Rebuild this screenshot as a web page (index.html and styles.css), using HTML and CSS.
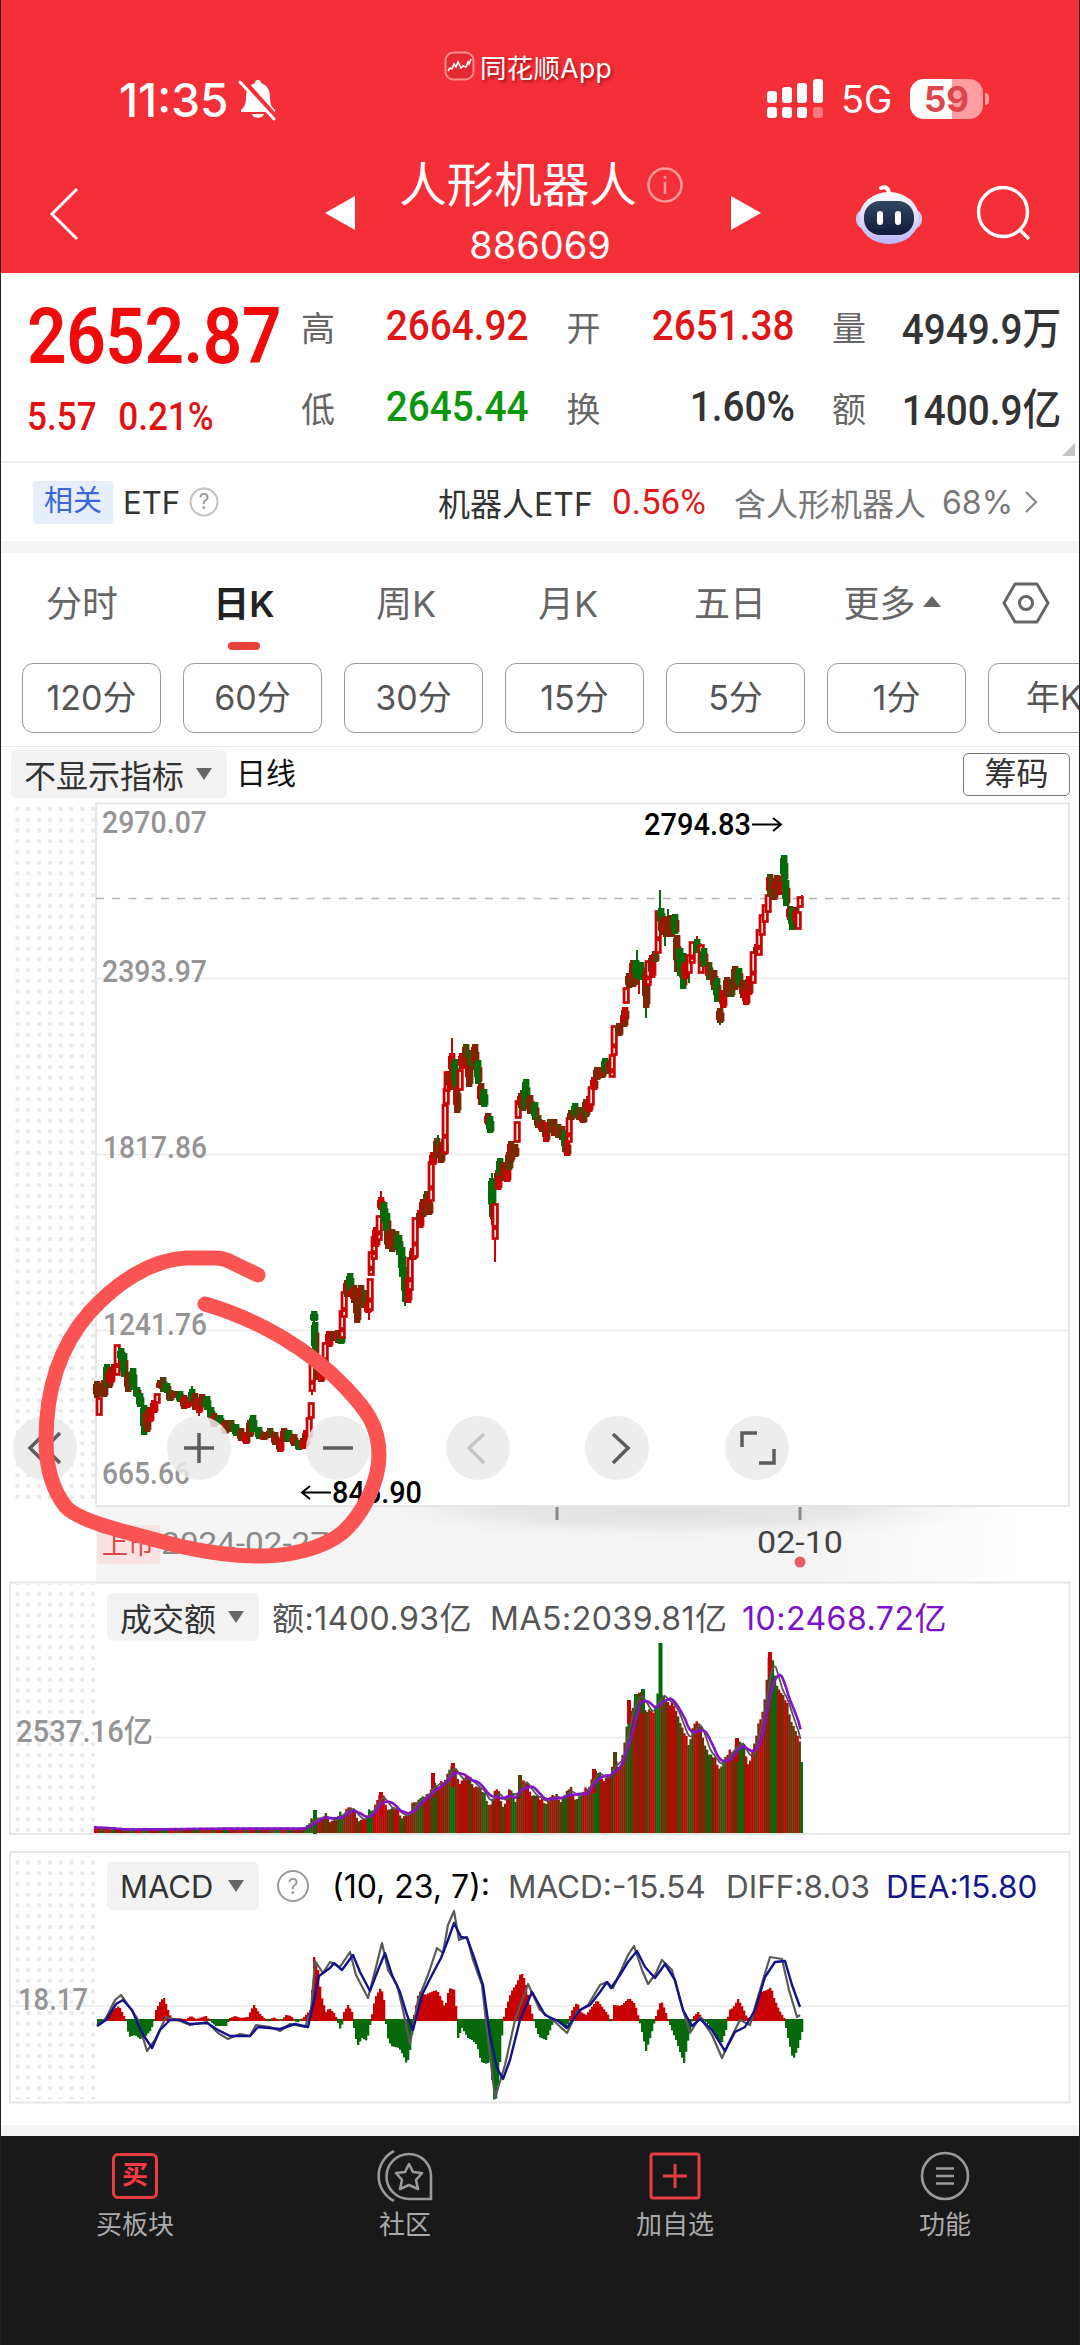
FILE: index.html
```html
<!DOCTYPE html>
<html lang="zh-CN">
<head>
  <meta charset="UTF-8">
  <title>人形机器人 886069</title>
  <link rel="stylesheet" href="styles.css">
</head>
<body>
<div class="app">

  <!-- Header -->
  <header class="header">
    <div class="status">
      <div class="clock">
        <span>11:35</span>
        <svg width="40" height="42" viewBox="0 0 40 42">
          <path d="M20 1c2 0 3 1 3 3 6 2 9 7 9 14 0 8 2 10 5 13v2H3v-2c3-3 5-5 5-13C8 11 11 6 17 4c0-2 1-3 3-3z" fill="#fff"/>
          <path d="M14 35h12c-1 5-11 5-12 0z" fill="#fff"/>
          <path d="M5 2l33 37" stroke="#f42f38" stroke-width="6"/>
          <path d="M2 3l34 37" stroke="#fff" stroke-width="3" stroke-linecap="round"/>
        </svg>
      </div>
      <div class="app-name">
        <svg width="32" height="30" viewBox="0 0 32 30">
          <rect x="1.5" y="1.5" width="28" height="27" rx="8" fill="#e32a32" stroke="#ff8d8d" stroke-width="2"/>
          <path d="M4 20l2-3 2 1 2-5 2 3 2-5 3 6 2-2 3 1 2-5 1 2 2-5" fill="none" stroke="#fff" stroke-width="1.6"/>
        </svg>
        <span>同花顺App</span>
      </div>
      <div class="signals">
        <svg width="58" height="42" viewBox="0 0 58 42" fill="#fff">
          <rect x="1" y="13" width="10" height="12" rx="3"/>
          <rect x="16" y="9" width="10" height="16" rx="3"/>
          <rect x="31" y="5" width="10" height="20" rx="3"/>
          <rect x="47" y="1" width="10" height="24" rx="3"/>
          <rect x="1" y="29" width="10" height="11" rx="3"/>
          <rect x="16" y="29" width="10" height="11" rx="3"/>
          <rect x="31" y="29" width="10" height="11" rx="3"/>
          <rect x="47" y="29" width="10" height="11" rx="3" opacity=".35"/>
        </svg>
        <span class="net">5G</span>
        <span class="battery">59</span>
      </div>
    </div>
    <div class="title-bar">
      <svg class="back" width="34" height="56" viewBox="0 0 34 56"><path d="M30 3L5 28l25 25" fill="none" stroke="#fff" stroke-width="3"/></svg>
      <svg class="prev" width="32" height="36" viewBox="0 0 32 36"><path d="M31 1v34L1 18z" fill="#fff"/></svg>
      <div class="title">
        <div class="name">
          <h1>人形机器人</h1>
          <svg width="38" height="38" viewBox="0 0 38 38" fill="none" stroke="#ff9a9a" stroke-width="2.5"><circle cx="19" cy="19" r="16.5"/><path d="M19 16v12M19 10v3"/></svg>
        </div>
        <div class="code">886069</div>
      </div>
      <svg class="next" width="32" height="36" viewBox="0 0 32 36"><path d="M1 1v34l30-17z" fill="#fff"/></svg>
      <svg class="robot" width="68" height="62" viewBox="0 0 68 62">
        <defs>
          <linearGradient id="shell" x1="0" y1="0" x2="0" y2="1"><stop offset="0" stop-color="#fff"/><stop offset="1" stop-color="#b9b5fa"/></linearGradient>
          <linearGradient id="face" x1="0" y1="0" x2="0" y2="1"><stop offset="0" stop-color="#31475f"/><stop offset="1" stop-color="#111b3c"/></linearGradient>
        </defs>
        <path d="M34 11c0-5-3-8-8-6" fill="none" stroke="#fff" stroke-width="4" stroke-linecap="round"/>
        <rect x="1" y="26" width="66" height="20" rx="9" fill="#cdc8fb"/>
        <ellipse cx="34" cy="35" rx="30" ry="26" fill="url(#shell)"/>
        <rect x="9" y="18" width="50" height="34" rx="16" fill="url(#face)"/>
        <rect x="22" y="28" width="6" height="14" rx="3" fill="#fff"/>
        <rect x="40" y="28" width="6" height="14" rx="3" fill="#fff"/>
      </svg>
      <svg class="search" width="56" height="54" viewBox="0 0 56 54" fill="none" stroke="#fff" stroke-width="3.4"><circle cx="27" cy="26" r="24.5"/><path d="M43 43l10 10"/></svg>
    </div>
  </header>

  <!-- Quote -->
  <section class="quote">
    <div class="last">
      <div class="price">2652.87</div>
      <div class="change"><span>5.57</span><span>0.21%</span></div>
    </div>
    <div class="stats">
      <div class="stat"><span>高</span><b class="up">2664.92</b></div>
      <div class="stat"><span>开</span><b class="up">2651.38</b></div>
      <div class="stat"><span>量</span><b>4949.9万</b></div>
      <div class="stat"><span>低</span><b class="down">2645.44</b></div>
      <div class="stat"><span>换</span><b>1.60%</b></div>
      <div class="stat"><span>额</span><b>1400.9亿</b></div>
    </div>
    <i class="corner"></i>
  </section>

  <section class="related">
    <span class="tag">相关</span>
    <span class="etf">ETF</span>
    <svg width="30" height="30" viewBox="0 0 30 30"><circle cx="15" cy="15" r="13.5" fill="none" stroke="#c2c2c2" stroke-width="2"/><text x="15" y="22" class="q">?</text></svg>
    <span class="fund">机器人ETF</span>
    <span class="fund-up">0.56%</span>
    <span class="holds">含人形机器人</span>
    <span class="ratio">68%</span>
    <svg width="14" height="24" viewBox="0 0 14 24"><path d="M2 2l10 10L2 22" fill="none" stroke="#888" stroke-width="2.2"/></svg>
  </section>

  <!-- Period tabs -->
  <nav class="tabs">
    <span>分时</span>
    <span class="active">日K</span>
    <span>周K</span>
    <span>月K</span>
    <span>五日</span>
    <span class="more">更多<i class="tri-up"></i></span>
    <svg width="48" height="42" viewBox="0 0 48 42" fill="none" stroke="#666" stroke-width="3"><path d="M13 2h22l11 19-11 19H13L2 21z" stroke-linejoin="round"/><circle cx="24" cy="21" r="6.5"/></svg>
  </nav>
  <div class="chips">
    <span>120分</span><span>60分</span><span>30分</span><span>15分</span><span>5分</span><span>1分</span><span>年K</span>
  </div>

  <div class="indicator">
    <span class="pick">不显示指标<i class="tri-down"></i></span>
    <span class="kline">日线</span>
    <span class="chip-btn">筹码</span>
  </div>

  <!-- K line chart -->
  <section class="kchart">
    <svg width="1080" height="780" viewBox="0 801 1080 780">
      <defs>
        <pattern id="dots" x="15.5" y="807" width="10.8" height="10.75" patternUnits="userSpaceOnUse"><rect width="4" height="4" rx="1" fill="#e9e9e9"/></pattern>
        <linearGradient id="axisX"><stop offset="0" stop-color="#f4f4f4"/><stop offset=".75" stop-color="#f5f5f5"/><stop offset=".95" stop-color="#fff"/></linearGradient>
        <radialGradient id="axisShade" cx=".5" cy="0" r=".5" gradientTransform="scale(1 1.6)"><stop offset="0" stop-color="#dfdfdf"/><stop offset=".5" stop-color="#e6e6e6"/><stop offset="1" stop-color="#f4f4f4" stop-opacity="0"/></radialGradient>
      </defs>
      <rect x="12" y="803" width="84" height="700" fill="url(#dots)"/>
      <rect x="96" y="1506" width="974" height="75" fill="url(#axisX)"/>
      <rect x="330" y="1507" width="680" height="45" fill="url(#axisShade)"/>
      <path class="grid" d="M96 978.5H1069M96 1154.5H1069M96 1330.5H1069"/>
      <rect class="frame" x="96" y="803.5" width="973" height="702.5"/>
      <path d="M96 898.5H1069" stroke="#b9b4a6" stroke-width="1.5" stroke-dasharray="8 8.2"/>
      <g class="axis-label">
        <text x="102" y="833" textLength="105" lengthAdjust="spacingAndGlyphs">2970.07</text>
        <text x="102" y="982" textLength="105" lengthAdjust="spacingAndGlyphs">2393.97</text>
        <text x="103" y="1158" textLength="104" lengthAdjust="spacingAndGlyphs">1817.86</text>
        <text x="103" y="1335" textLength="104" lengthAdjust="spacingAndGlyphs">1241.76</text>
        <text x="102" y="1484" textLength="88" lengthAdjust="spacingAndGlyphs">665.66</text>
      </g>
      <g id="candles"></g>
      <g class="mark">
        <text x="644" y="835" textLength="107" lengthAdjust="spacingAndGlyphs">2794.83</text>
        <path d="M752 824.5h29M773 818l8 6.500-8 6.500"/>
        <text x="332" y="1503" textLength="90" lengthAdjust="spacingAndGlyphs">845.90</text>
        <path d="M331 1492.500h-29M310 1486l-8 6.500 8 6.500"/>
      </g>
      <path d="M557 1507v13M800 1507v13" stroke="#888" stroke-width="3"/>
      <rect x="97" y="1525" width="63" height="39" fill="#fbe2e2"/>
      <text x="102" y="1554" class="listed">上市</text>
      <text x="161" y="1554" class="date old" textLength="168" lengthAdjust="spacingAndGlyphs">2024-02-27</text>
      <text x="757" y="1553" class="date" textLength="86" lengthAdjust="spacingAndGlyphs">02-10</text>
      <circle cx="800" cy="1562" r="5.500" fill="#e45c5f"/>
    </svg>
    <div class="tools">
      <span><svg viewBox="0 0 64 64"><path d="M32 17L17 32l15 15M47 17L32 32l15 15"/></svg></span>
      <span><svg viewBox="0 0 64 64"><path d="M32 17v30M17 32h30"/></svg></span>
      <span><svg viewBox="0 0 64 64"><path d="M17 32h30"/></svg></span>
      <span class="off"><svg viewBox="0 0 64 64"><path d="M38 18L23 32l15 15"/></svg></span>
      <span><svg viewBox="0 0 64 64"><path d="M28 18l15 14-15 15"/></svg></span>
      <span><svg viewBox="0 0 64 64"><path d="M17 31V17h15M49 33v14H34"/></svg></span>
    </div>
    <!-- hand drawn circle -->
    <svg class="scribble" width="1080" height="780" viewBox="0 801 1080 780">
      <path d="M258 1275L233 1263Q224 1258 215 1258H186C150 1260 116 1283 89 1313C55 1352 46 1400 46 1440C46 1470 54 1492 66 1507C80 1522 130 1533 179 1546C210 1553 235 1556 257 1556C290 1557 325 1547 342 1533C364 1514 379 1480 379 1455C379 1425 365 1408 345 1387C310 1350 260 1320 205 1304"/>
    </svg>
  </section>

  <!-- Turnover -->
  <section class="panel volume">
    <svg width="1080" height="254" viewBox="0 1581 1080 254">
      <rect x="12" y="1584" width="84" height="248" fill="url(#dots)"/>
      <path class="grid" d="M155 1737.500H1069"/>
      <rect class="frame" x="10" y="1582.500" width="1059.500" height="251.500"/>
      <text x="16" y="1742" class="axis-label" textLength="137" lengthAdjust="spacingAndGlyphs">2537.16亿</text>
      <g id="turnover"></g>
    </svg>
    <div class="legend">
      <span class="pick">成交额<i class="tri-down"></i></span>
      <span class="v1">额:1400.93亿</span>
      <span class="v2">MA5:2039.81亿</span>
      <span class="v3 purple">10:2468.72亿</span>
    </div>
  </section>

  <!-- MACD -->
  <section class="panel macd">
    <svg width="1080" height="254" viewBox="0 1850 1080 254">
      <rect x="12" y="1855" width="84" height="244" fill="url(#dots)"/>
      <path class="grid" d="M10 2006H1069"/>
      <rect class="frame" x="10" y="1852" width="1059.500" height="250.500"/>
      <text x="18" y="2010" class="axis-label" textLength="70" lengthAdjust="spacingAndGlyphs">18.17</text>
      <g id="macd"></g>
    </svg>
    <div class="legend">
      <span class="pick">MACD<i class="tri-down"></i></span>
      <svg class="help" width="34" height="34" viewBox="0 0 34 34"><circle cx="17" cy="17" r="15" fill="none" stroke="#999" stroke-width="2"/><text x="17" y="25" class="q">?</text></svg>
      <span class="m1">(10, 23, 7):</span>
      <span class="m2">MACD:-15.54</span>
      <span class="m3">DIFF:8.03</span>
      <span class="m4 navy">DEA:15.80</span>
    </div>
  </section>

  <!-- Bottom bar -->
  <footer class="bottom">
    <div>
      <span class="buy">买</span>
      <span>买板块</span>
    </div>
    <div>
      <svg width="56" height="52" viewBox="0 0 56 52" fill="none" stroke="#9a9a9a" stroke-width="2.600">
        <path d="M32 4a22 22 0 1 0 0 45h22V26A22 22 0 0 0 32 4z"/>
        <path d="M17 1a28 28 0 0 0 0 50"/>
        <path d="M32 14l4 8 9 1-6 7 2 9-9-4-9 4 2-9-6-7 9-1z" stroke-linejoin="round"/>
      </svg>
      <span>社区</span>
    </div>
    <div>
      <svg width="52" height="52" viewBox="0 0 52 52" fill="none" stroke="#ea3a42" stroke-width="3"><rect x="2" y="4" width="48" height="44" rx="2"/><path d="M26 14v24M14 26h24"/></svg>
      <span>加自选</span>
    </div>
    <div>
      <svg width="52" height="52" viewBox="0 0 52 52" fill="none" stroke="#9a9a9a" stroke-width="2.600"><circle cx="26" cy="26" r="23"/><path d="M17 18.500h18M17 26h18M17 33.500h18"/></svg>
      <span>功能</span>
    </div>
  </footer>
</div>
<script src="charts.js"></script>
</body>
</html>
```

FILE: styles.css
```css
* {
  box-sizing: border-box;
}

body {
  margin: 0;
  background: #fff;
  font-family: Inter, "Noto Sans CJK SC", sans-serif;
  color: #333;
}

.app {
  width: 1080px;
  height: 2345px;
  overflow: hidden;
  border-left: 1px solid #222;
  border-right: 1px solid #222;
}

svg {
  display: block;
  flex: none;
}

span, h1, b {
  white-space: nowrap;
}

/* Header */
.header {
  height: 273px;
  background: #f42f38;
  color: #fff;
}

.status {
  height: 150px;
  display: grid;
  grid-template-columns: 360px 1fr 360px;
}

.clock {
  display: flex;
  align-items: center;
  padding: 49px 0 0 118px;
  gap: 10px;
  font-size: 46px;
  font-weight: 500;
}

.app-name {
  display: flex;
  justify-content: center;
  align-items: center;
  gap: 4px;
  height: 40px;
  margin: 46px 24px 0 0;
  font-size: 26.500px;
  letter-spacing: 0.300px;
  text-shadow: 2px 2px 3px rgba(120, 0, 0, 0.6);
}

.signals {
  display: flex;
  align-items: center;
  padding: 48px 0 0 47px;
}

.net {
  width: 68px;
  margin-left: 17px;
  font-size: 38px;
}

.battery {
  width: 73px;
  height: 40px;
  margin-left: 1px;
  border-radius: 14px;
  background: linear-gradient(90deg, #fff 58%, #ff9da1 58%);
  color: #e0444c;
  font-size: 35px;
  font-weight: 700;
  line-height: 40px;
  text-align: center;
}

.battery::after {
  content: "";
  float: right;
  width: 4px;
  height: 12px;
  margin: 14px -6px 0 0;
  border-radius: 0 4px 4px 0;
  background: #ff9da1;
}

.title-bar {
  display: flex;
  align-items: flex-start;
  height: 123px;
  padding-left: 46px;
}

.back { margin-top: 36px; }
.prev { margin: 45px 0 0 243px; }

.title {
  width: 374px;
  padding-right: 3px;
}

.name {
  display: flex;
  justify-content: center;
  align-items: center;
  gap: 9px;
  height: 70px;
}

.name h1 {
  margin: 0;
  font-size: 47.500px;
  font-weight: 400;
  line-height: 70px;
}

.code {
  margin-right: 3px;
  font-size: 38px;
  line-height: 50px;
  text-align: center;
}

.next { margin-top: 45px; }
.robot { margin: 33px 0 0 93px; }
.search { margin: 36px 0 0 53px; }

/* Quote */
.quote {
  position: relative;
  display: flex;
  height: 190px;
  border-bottom: 2px solid #eee;
  font-family: Roboto, "Noto Sans CJK SC", sans-serif;
}

.last {
  width: 300px;
  padding-left: 26px;
  color: #f00a0a;
}

/* narrow figures */
.price, .change, .stat b {
  transform: scaleX(0.9);
  transform-origin: left;
}

.price {
  height: 116px;
  font-size: 77px;
  font-weight: 600;
  line-height: 129px;
  letter-spacing: -0.500px;
}

.change {
  display: flex;
  gap: 24px;
  font-size: 39px;
  font-weight: 500;
  line-height: 57px;
  color: #e01212;
}

.stats {
  display: grid;
  grid-template-columns: 228px 228px 229px;
  grid-template-rows: 81px 81px;
  column-gap: 37.500px;
  width: 760px;
  padding-top: 13px;
}

.stat {
  display: flex;
  justify-content: space-between;
  align-items: center;
  font-size: 34px;
  color: #666;
}

.stat b {
  margin-top: -4px;
  font-size: 43px;
  font-weight: 500;
  transform-origin: right;
  color: #333;
}

.stat .up { color: #e01515; }
.stat .down { color: #0b960b; }

.corner {
  position: absolute;
  right: 4px;
  bottom: 5px;
  border-left: 13px solid transparent;
  border-bottom: 13px solid #c5c5c5;
}

/* Related ETF */
.related {
  display: flex;
  align-items: center;
  height: 90px;
  padding-left: 32px;
  border-bottom: 12px solid #f5f5f5;
  font-size: 32px;
}

.related span { flex: none; }

.related .tag {
  width: 80px;
  height: 43px;
  border-radius: 4px;
  background: #e7eefb;
  color: #3c66d8;
  font-size: 29px;
  line-height: 40px;
  text-align: center;
}

.etf { width: 76px; padding-left: 10px; font-size: 31px; }
.fund { width: 174px; margin-left: 219px; font-size: 32px; }
.fund-up { width: 122px; color: #e01a1a; font-family: Roboto; font-size: 35px; }
.holds { width: 208px; color: #777; }
.ratio { width: 82px; color: #777; }

.q {
  font: 21px Inter;
  fill: #999;
  text-anchor: middle;
}

/* Tabs */
.tabs {
  display: grid;
  grid-template-columns: repeat(6, 162px) 106px;
  align-items: center;
  justify-items: center;
  height: 110px;
  padding-bottom: 14px;
  font-size: 36px;
  color: #666;
}

.tabs svg { margin-top: 3px; }

.tabs .active {
  position: relative;
  color: #222;
  font-weight: 600;
}

.tabs .active::after {
  content: "";
  position: absolute;
  left: 50%;
  bottom: -23px;
  width: 32px;
  height: 8px;
  margin-left: -16px;
  border-radius: 4px;
  background: #eb4038;
}

.more {
  display: flex;
  align-items: center;
  gap: 7px;
}

.tri-up {
  border: 9px solid transparent;
  border-top: 0;
  border-bottom: 11px solid #666;
}

.tri-down {
  border: 8px solid transparent;
  border-bottom: 0;
  border-top: 12px solid #666;
}

.chips {
  display: flex;
  gap: 22px;
  height: 84px;
  padding-left: 21px;
  border-bottom: 1px solid #e8e8e8;
  overflow: hidden;
}

.chips span {
  flex: none;
  width: 139px;
  height: 70px;
  border: 1.500px solid #999;
  border-radius: 11px;
  font-size: 34px;
  line-height: 67px;
  text-align: center;
  color: #555;
}

.chips span:last-child {
  text-align: left;
  padding-left: 37px;
}

.indicator {
  display: flex;
  align-items: center;
  height: 54px;
  padding-left: 10px;
}

.pick {
  display: flex;
  align-items: center;
  justify-content: space-between;
  height: 48px;
  padding: 0 15px 0 13px;
  border-radius: 6px;
  background: #f2f2f2;
  font-size: 32px;
}

.indicator .pick { width: 216px; }
.kline { flex: 1; padding-left: 9px; font-size: 30px; line-height: 42px; margin-top: -3px; color: #111; }

.chip-btn {
  width: 107px;
  height: 43px;
  margin-right: 9px;
  border: 1.500px solid #777;
  border-radius: 5px;
  font-size: 32px;
  line-height: 39px;
  text-align: center;
}

/* Charts. The svgs start at the outer page edge */
.kchart {
  position: relative;
  height: 780px;
}

.kchart > svg, .panel > svg {
  margin-left: -1px;
}

.grid {
  fill: none;
  stroke: #ebebeb;
  stroke-width: 1.500;
}

.frame {
  fill: none;
  stroke: #e6e6e6;
  stroke-width: 2;
}

.axis-label {
  font: 500 31px Roboto, "Noto Sans CJK SC", sans-serif;
  fill: #959595;
}

.mark text {
  font: 500 31px Roboto, sans-serif;
  fill: #000;
}

.mark path {
  fill: none;
  stroke: #000;
  stroke-width: 2;
}

.date {
  font: 400 31px Roboto, sans-serif;
  fill: #444;
}

.date.old { fill: #8a8a8a; }

.listed {
  font: 26px "Noto Sans CJK SC", sans-serif;
  fill: #d8474a;
}

.tools {
  position: absolute;
  left: 12px;
  top: 615px;
  display: flex;
  gap: 75.500px;
}

.tools span {
  width: 64px;
  height: 64px;
  border-radius: 50%;
  background: rgba(234, 234, 234, 0.85);
}

.tools span:first-child { margin-right: 14px; }

.tools svg {
  fill: none;
  stroke: #5c5c5c;
  stroke-width: 3.500;
}

.tools .off svg { stroke: #c5c5c5; }

.scribble {
  position: absolute;
  left: 0;
  top: 0;
  fill: none;
  stroke: #fc5353;
  stroke-width: 15;
  stroke-linecap: round;
  stroke-linejoin: round;
}

.panel {
  display: grid;
  height: 254px;
  margin-bottom: 15px;
}

.panel > svg, .legend {
  grid-area: 1 / 1;
}

.legend {
  display: flex;
  align-items: center;
  height: 48px;
  margin: 12px 0 0 106px;
  font-size: 32px;
  color: #555;
}

.legend .pick { width: 152px; color: #333; }
.macd .pick { font-size: 31px; }
.legend > span { flex: none; }
.v1, .v2, .v3 { letter-spacing: 0.500px; margin-top: -3px; }
.v1 { width: 218px; margin-left: 13px; }
.v2 { width: 252px; }
.purple { color: #7d10c8; }
.navy { color: #14148c; }
.help { margin-left: 17px; }
.m1 { width: 176px; margin-left: 22px; color: #000; }
.m2 { width: 218px; }
.m3 { width: 160px; }
.m2, .m3, .m4 { font-size: 31.500px; }

.macd { margin-bottom: 21px; }

/* Bottom bar */
.bottom {
  display: grid;
  grid-template-columns: repeat(4, 270px);
  height: 220px;
  margin: 0 -1px;
  padding-top: 14px;
  border-top: 11px solid #f4f4f4;
  background: #191919;
  background-clip: padding-box;
  font-size: 26px;
  color: #aaa;
}

.bottom div {
  display: flex;
  flex-direction: column;
  align-items: center;
  gap: 2px;
}

.bottom .buy {
  width: 46px;
  height: 46px;
  margin: 3px 0;
  border: 3px solid #ea3a42;
  border-radius: 6px;
  color: #ff3a44;
  font-size: 26px;
  font-weight: 700;
  line-height: 38px;
  text-align: center;
}
```

FILE: charts.js
```js
const RED = "#c80303", GREEN = "#066a0a", MIX = "#7d2603", OLIVE = "#4e4304";

// Candles: x, top, bottom, kind (h hollow up, r up, g down, m overlap)
const candles = `97,1381,1398,m 99,1398,1415,h 104,1380,1397,m 107,1364,1387,g 109,1370,1388,m 111,1367,1383,r 114,1364,1375,r
117,1345,1375,h 121,1348,1360,g 124,1353,1377,g 128,1372,1392,m 133,1368,1390,g 137,1387,1397,g 140,1393,1407,g 144,1405,1435,g
147,1410,1432,m 150,1407,1422,r 154,1400,1413,r 157,1394,1403,h 160,1380,1388,m 163,1377,1392,o 167,1383,1393,g 170,1390,1401,o
175,1391,1398,m 180,1391,1402,g 184,1395,1409,m 187,1397,1408,r 192,1389,1402,g 195,1393,1410,m 199,1398,1413,r 202,1394,1407,m
207,1396,1410,g 211,1407,1420,g 214,1413,1427,m 220,1415,1425,g 225,1420,1434,m 231,1420,1432,o 236,1424,1436,g 241,1428,1441,m
246,1432,1444,r 250,1420,1437,m 253,1415,1432,g 259,1427,1439,g 264,1432,1440,m 270,1428,1438,o 275,1432,1445,m 280,1438,1452,r
284,1428,1442,m 289,1430,1442,g 294,1434,1446,m 299,1440,1450,g 303,1438,1449,r 306,1430,1446,r 309,1418,1437,h 311,1403,1418,h
312,1363,1391,h 314,1311,1321,g 315,1322,1357,g 317,1357,1380,m 321,1367,1382,r 325,1343,1367,h 329,1331,1347,r 333,1331,1341,m
338,1330,1343,m 341,1332,1344,g 342,1311,1338,h 344,1292,1317,h 347,1280,1297,m 350,1273,1290,g 354,1285,1303,m 357,1291,1323,m
361,1285,1302,m 364,1290,1308,o 368,1302,1313,r 370,1279,1310,h 371,1252,1275,h 374,1237,1259,h 376,1227,1247,r 379,1216,1240,h
381,1197,1210,r 384,1202,1223,g 387,1213,1238,g 388,1230,1249,m 392,1229,1252,m 396,1231,1248,o 399,1235,1255,g 402,1247,1277,g
405,1267,1302,g 408,1277,1303,r 410,1258,1290,h 413,1248,1260,r 415,1218,1257,h 420,1210,1228,r 423,1199,1217,m 427,1191,1212,o
429,1197,1215,m 431,1162,1201,h 433,1152,1165,r 437,1138,1158,o 441,1143,1163,m 444,1139,1155,m 445,1105,1153,h 446,1089,1104,h
447,1072,1091,h 450,1071,1090,r 452,1053,1075,r 455,1059,1090,g 457,1085,1113,m 460,1070,1090,h 462,1053,1069,r 466,1044,1065,o
469,1055,1087,m 472,1050,1066,g 475,1044,1070,m 478,1060,1084,g 481,1083,1105,m 484,1089,1107,g 488,1113,1125,m 490,1116,1133,g
492,1178,1217,g 494,1203,1225,m 495,1204,1239,h 498,1170,1190,r 500,1158,1176,g 503,1162,1181,m 507,1165,1182,r 509,1152,1170,o
511,1141,1162,m 515,1144,1157,m 517,1122,1142,h 518,1101,1118,h 521,1093,1108,m 523,1090,1111,o 526,1079,1107,g 530,1095,1114,m
535,1102,1120,g 538,1115,1128,o 542,1120,1132,m 546,1122,1142,r 550,1119,1133,o 554,1119,1136,m 558,1124,1138,o 562,1126,1140,m
565,1130,1152,g 567,1140,1156,r 569,1118,1142,h 571,1110,1120,m 575,1103,1116,g 579,1107,1120,o 583,1112,1123,m 586,1099,1117,o
589,1096,1112,r 591,1087,1105,h 594,1077,1090,r 597,1067,1080,m 602,1067,1078,m 605,1058,1072,g 609,1060,1074,o 612,1055,1077,h
614,1026,1055,h 619,1023,1036,m 624,1012,1027,m 625,1007,1020,r 626,988,1003,h 629,973,988,m 633,960,987,m 636,960,978,g
641,962,980,g 646,970,1008,m 648,961,985,h 652,955,978,r 655,951,962,o 658,911,953,h 661,908,925,g 662,917,935,m 666,916,937,m
671,915,937,m 675,914,934,g 677,935,972,m 680,948,976,g 683,953,989,g 685,962,979,r 689,955,973,h 692,942,963,h 697,939,953,g
701,945,973,h 704,948,967,g 709,962,980,o 714,970,990,m 717,978,1002,g 720,1008,1023,m 723,990,1008,r 727,977,997,m 731,979,997,o
735,966,990,m 739,968,986,g 743,980,998,m 746,988,1005,r 749,976,995,r 753,952,983,h 757,944,955,r 759,930,955,h 762,915,935,h
765,905,922,h 768,895,912,h 770,874,897,o 774,882,900,m 777,875,893,m 781,876,895,r 784,855,882,g 786,880,906,g 790,906,920,m
792,907,930,g 796,907,925,m 798,912,929,h 800,897,907,h`;

const wicks = [[381,1191,1216,RED],[314,1318,1330,GREEN],[452,1038,1056,RED],[495,1238,1262,RED],[492,1173,1180,GREEN],
  [637,950,985,GREEN],[646,1005,1018,GREEN],[660,890,912,GREEN],[665,932,946,GREEN],[668,909,920,GREEN],[689,968,983,GREEN],
  [720,1020,1025,GREEN],[802,895,902,RED],[192,1386,1392,GREEN],[369,1308,1320,RED],[405,1300,1306,GREEN],
  [639,975,994,RED],[697,936,941,RED],[199,1410,1416,RED],[312,1388,1395,RED],[438,1135,1140,GREEN]];

const fills = { r: RED, g: GREEN, m: MIX, o: OLIVE };
let out = "";
wicks.forEach(([x, a, b, c]) => {
  out += `<rect x="${x - 1}" y="${a}" width="2" height="${b - a}" fill="${c}"/>`;
});
candles.split(/\s+/).forEach((item, i) => {
  const [sx, st, sb, kind] = item.split(",");
  const x = +sx, t = +st, h = sb - st;
  if (kind === "h") {
    out += `<rect x="${x - 2}" y="${t + 0.5}" width="4.4" height="${h - 1}" fill="#ffe4e0" stroke="${RED}" stroke-width="2.7"/>`;
    if (h > 20) out += `<rect x="${x - 3}" y="${t + h * 0.6}" width="6" height="5" fill="${RED}"/>`;
    return;
  }
  const c = fills[kind];
  out += `<rect x="${x - 3}" y="${t}" width="6.4" height="${h}" fill="${c}"/>`;
  // neighbours peek out from under the body
  out += `<rect x="${x - 4}" y="${t + 3}" width="2" height="${h * 0.6}" fill="${kind === "g" ? GREEN : i % 2 ? RED : MIX}"/>`;
  out += `<rect x="${x + 2}" y="${t + h * 0.3}" width="2.4" height="${h * 0.6}" fill="${i % 3 ? c : MIX}"/>`;
});
document.getElementById("candles").innerHTML = out;

// Linear interpolation over [x, y] anchors
function at(points, x) {
  for (let i = 1; i < points.length; i++) {
    if (x <= points[i][0]) {
      const [x0, y0] = points[i - 1], [x1, y1] = points[i];
      return y0 + (y1 - y0) * (x - x0) / (x1 - x0);
    }
  }
  return points[points.length - 1][1];
}

function parse(text) {
  return text.trim().split(/\s+/).map(p => p.split(",").map(Number));
}

function line(points, color, width) {
  return `<polyline points="${points.map(p => p.join(",")).join(" ")}" fill="none" stroke="${color}" stroke-width="${width}" stroke-linejoin="round"/>`;
}

// Turnover
const vol = parse(`94,1827 110,1828 120,1829 220,1828 300,1828 304,1827 310,1819 314,1810 320,1817 326,1812 334,1818 346,1803 352,1809
364,1818 370,1805 380,1792 388,1804 400,1810 408,1813 414,1794 425,1796 432,1775 437,1788 445,1770 452,1763 458,1776 466,1775
474,1780 482,1791 490,1800 495,1786 503,1801 509,1786 514,1797 519,1776 530,1787 540,1799 548,1794 562,1794 569,1786 577,1795
584,1788 593,1769 600,1773 609,1773 614,1753 619,1762 623,1745 627,1712 631,1701 635,1694 640,1690 643,1704 648,1704 653,1713
657,1690 660,1686 668,1704 674,1699 680,1724 687,1740 692,1721 697,1720 703,1735 708,1752 714,1757 720,1762 727,1752 735,1739
742,1742 748,1759 754,1740 759,1715 764,1692 768,1653 771,1657 775,1675 779,1688 785,1700 790,1713 795,1730 799,1743 802,1778`);
const volColors = [RED, MIX, OLIVE, MIX, RED, OLIVE, GREEN, MIX, RED, MIX, MIX, OLIVE, GREEN, OLIVE, RED, MIX];
const bars = [];
for (let x = 94; x <= 801; x += 2.06) {
  const i = bars.length;
  const jitter = x > 305 && x < 798 ? [0, 5, 2, 8, 1, 6, 3][(i * 5) % 7] : i % 3 * 0.6;
  bars.push([x, Math.min(1831, at(vol, x) + jitter)]);
}
out = "";
bars.forEach(([x, y], i) => {
  const c = volColors[(Math.floor(i * 0.7) + Math.floor(i / 23) * 5) % volColors.length];
  out += `<rect x="${x}" y="${y}" width="2.4" height="${1833 - y}" fill="${c}"/>`;
});
out += `<rect x="658.500" y="1643" width="4" height="60" fill="${GREEN}"/>`;
// single spikes above the average lines
[[627, 1700, RED], [634, 1694, GREEN], [641, 1689, GREEN], [613, 1752, OLIVE], [592, 1769, RED], [768, 1652, RED], [735, 1738, RED],
  [518, 1775, OLIVE], [431, 1773, RED], [451, 1763, RED], [379, 1792, RED], [313, 1810, GREEN]].forEach(([x, y, c]) => {
  out += `<rect x="${x}" y="${y}" width="4" height="24" fill="${c}"/>`;
});
function average(n) {
  return bars.map(([x], i) => {
    const part = bars.slice(Math.max(0, i - n + 1), i + 1);
    return [x.toFixed(1), (part.reduce((s, b) => s + b[1], 0) / part.length).toFixed(1)];
  });
}
out += line(average(5), "#555", 1.8) + line(average(8), "#8414c4", 2.6);
document.getElementById("turnover").innerHTML = out;

// MACD histogram, diff and dea
const hist = parse(`96,-6 100,-5 104,2 110,9 118,14 123,4 125,-1 128,-17 134,-15 139,-19 144,-17 150,-10 153,-1 155,10 160,20 163,22
167,10 170,2 185,1 190,4 195,1 205,4 210,-2 215,-6 225,-6 229,2 234,4 240,2 247,3 250,10 253,15 258,7 262,3 268,-2 272,3 280,-1
285,5 290,4 296,-3 303,3 309,10 312,40 313,63 317,50 320,25 325,8 328,12 334,6 338,-6 340,-11 343,8 347,15 351,8 354,-16 357,-25
361,-18 366,-21 369,-5 374,22 380,33 383,20 386,-16 390,-26 398,-28 402,-35 406,-45 410,-25 413,5 418,29 424,25 430,28 436,30
440,22 444,12 448,32 454,30 457,-18 461,-8 467,-18 471,-20 476,-25 480,-42 486,-44 490,-40 492,-80 496,-78 500,-30 502,-1 505,12
510,28 516,37 520,48 524,40 530,10 534,-5 538,-17 545,-20 550,-8 553,1 560,-4 566,-8 570,8 576,18 580,8 585,5 590,12 596,20
602,12 608,4 610,-6 613,15 620,14 628,22 634,16 638,1 641,-12 645,-31 650,-15 655,4 660,20 664,10 670,-8 675,-20 680,-35 683,-43
688,-15 692,3 697,8 702,1 708,-5 715,-18 720,-25 725,-10 728,10 732,12 737,21 742,12 746,2 750,3 755,15 760,28 766,30 770,33
773,22 778,10 783,2 787,-18 792,-40 797,-28 801,-12`);
const diff = parse(`97,2026 106,2018 115,2000 121,1995 128,2005 137,2018 147,2051 155,2040 166,2017 180,2021 190,2025 207,2022 218,2033
228,2039 240,2034 250,2036 256,2025 270,2027 280,2031 290,2024 305,2027 311,2010 315,1961 323,1973 330,1962 340,1967 350,1952
356,1975 368,1998 374,1975 382,1943 388,1970 397,1985 403,2010 410,2044 418,2000 428,1975 437,1948 443,1953 448,1925 454,1911
459,1940 467,1937 473,1960 482,1985 487,2030 495,2098 505,2065 515,2020 528,1984 540,2010 555,2022 567,2033 577,2012 588,2005
600,1985 607,1982 613,1988 620,1973 628,1955 634,1946 642,1970 648,1984 655,1975 662,1960 672,1970 680,2000 690,2033 700,2017
712,2035 722,2058 730,2040 740,2020 750,2025 757,2000 763,1980 770,1957 782,1959 789,1990 797,2017 800,2015`);
const dea = parse(`97,2026 106,2020 116,2004 123,2000 132,2010 142,2033 152,2048 160,2030 170,2020 180,2020 190,2024 207,2023 218,2030
230,2036 250,2036 258,2027 280,2029 295,2024 308,2027 314,2000 319,1976 330,1968 334,1963 342,1970 353,1955 360,1972 370,1991
378,1970 385,1953 392,1975 400,1992 407,2015 413,2030 422,1995 432,1975 441,1958 448,1940 454,1923 461,1937 467,1938 475,1960
483,1985 490,2035 497,2068 503,2079 510,2060 520,2020 532,1992 545,2015 558,2021 567,2028 580,2010 590,2005 600,1992 607,1982
611,1988 620,1975 628,1962 637,1951 645,1967 655,1978 665,1964 675,1980 683,2010 692,2026 700,2019 712,2030 725,2051 735,2032
745,2027 755,2010 765,1977 775,1962 785,1961 792,1985 800,2007`);
out = `<path d="M97 2020H802" stroke="${GREEN}" stroke-width="1.500"/>`;
for (let x = 97; x <= 801; x += 2) {
  const v = at(hist, x);
  out += v > 0
    ? `<rect x="${x}" y="${2020 - v}" width="2.300" height="${v + 1}" fill="#c80000"/>`
    : `<rect x="${x}" y="2019" width="2.300" height="${1 - v}" fill="${GREEN}"/>`;
}
out += line(diff, "#5a5a5a", 2.2) + line(dea, "#12128a", 2.4);
document.getElementById("macd").innerHTML = out;
```
